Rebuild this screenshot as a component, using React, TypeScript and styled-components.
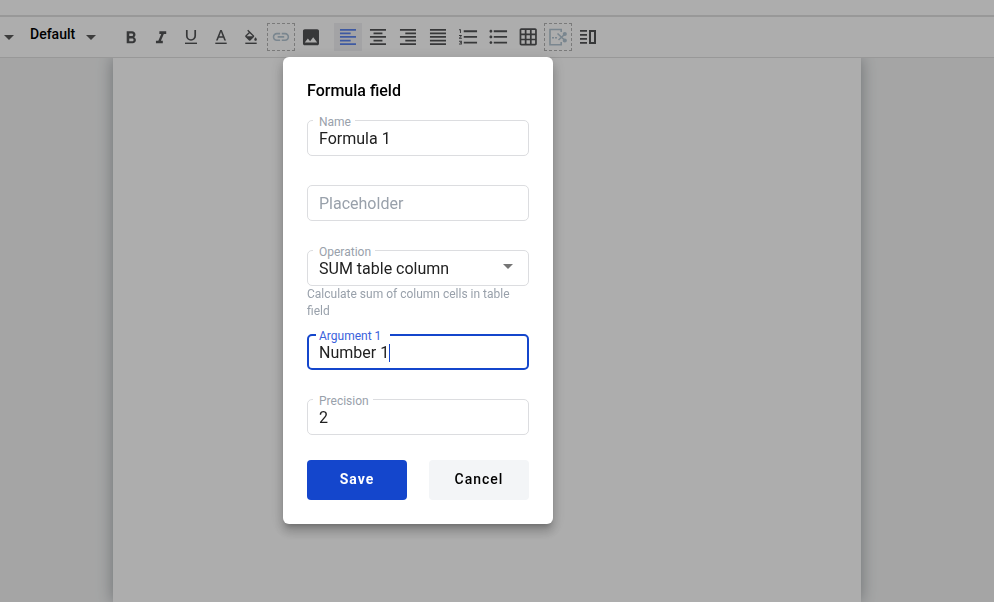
import React, { useEffect, useRef } from 'react';
import styled, { createGlobalStyle, css } from 'styled-components';

const GlobalStyle = createGlobalStyle`
  *, *::before, *::after { box-sizing: border-box; }
  html, body, #root { height: 100%; }
  body {
    margin: 0;
    overflow: hidden;
    background: #f3f4f4;
    color: #000;
    font-family: Roboto, "Liberation Sans", sans-serif;
  }
  button, input, select { font: inherit; }
`;

const Shell = styled.div`
  display: flex;
  flex-direction: column;
  min-height: 100vh;
`;

const Header = styled.header`
  height: 17px;
  background: #fff;
  border-bottom: 2px solid #e1e1e1;
`;

const Toolbar = styled.div`
  display: flex;
  align-items: center;
  height: 41px;
  background: #fff;
  border-bottom: 1px solid #e1e1e1;
`;

const Collapse = styled.button`
  display: flex;
  align-items: center;
  justify-content: center;
  width: 18px;
  height: 28px;
  padding: 0;
  border: 0;
  background: none;
  color: #5a5a5a;
`;

const FontPicker = styled.button`
  display: flex;
  align-items: center;
  gap: 11px;
  margin-left: 12px;
  padding: 0;
  border: 0;
  background: none;
  color: #5a5a5a;
`;

const FontName = styled.span`
  padding-bottom: 6px;
  color: #000;
  font-size: 14px;
  font-weight: 500;
  line-height: 20px;
`;

const Tools = styled.div<{ $gap: number }>`
  display: flex;
  gap: 2px;
  margin-left: ${(p) => p.$gap}px;
`;

const ToolButton = styled.button<{ $active?: boolean; $dashed?: boolean }>`
  display: flex;
  width: 28px;
  height: 28px;
  padding: 0;
  border: 0;
  color: #525355;
  background: ${(p) => (p.$active ? '#f1f1f4' : 'none')};
  ${(p) => p.$active && css`color: #5c84ee;`}
  ${(p) =>
    p.$dashed &&
    css`
      outline: 1px dashed #b4b4b4;
      outline-offset: -1px;
      color: #b4c6d3;
    `}
  svg {
    display: block;
    width: 28px;
    height: 28px;
    fill: currentColor;
  }
`;

const Canvas = styled.main`
  display: flex;
  flex: 1;
  justify-content: center;
  padding-right: 20px;
`;

const Page = styled.div`
  width: 748px;
  max-width: 100%;
  background: #fff;
  box-shadow: 0 0 15px rgba(40, 50, 60, 0.4);
  clip-path: inset(0 -20px);
`;

const Backdrop = styled.div`
  position: fixed;
  inset: 0;
  background: rgba(0, 0, 0, 0.32);
`;

const Dialog = styled.form`
  position: absolute;
  top: 57px;
  left: 283px;
  width: 270px;
  padding: 24px;
  border-radius: 6px;
  background: #fff;
  box-shadow: 0 5px 5px -3px rgba(0, 0, 0, 0.2), 0 8px 10px 1px rgba(0, 0, 0, 0.14),
    0 3px 14px 2px rgba(0, 0, 0, 0.12);
`;

const Title = styled.h2`
  margin: 0 0 19px;
  font-size: 16px;
  font-weight: 500;
  line-height: 20px;
`;

const Field = styled.div`
  position: relative;
  margin-bottom: 29px;
`;

const Label = styled.label<{ $focused?: boolean }>`
  position: absolute;
  top: -6px;
  left: ${(p) => (p.$focused ? 9 : 6)}px;
  padding: ${(p) => (p.$focused ? '0 9px 0 3px' : '0 4px 0 6px')};
  background: #fff;
  color: ${(p) => (p.$focused ? '#3a62dc' : '#99a1ab')};
  font-size: 12px;
  line-height: 16px;
`;

const control = css`
  display: block;
  width: 100%;
  height: 36px;
  padding: 0 11px;
  border: 1px solid #dcdde0;
  border-radius: 5px;
  outline: 0;
  background: #fff;
  color: #212121;
  font-size: 16px;
  line-height: 20px;
`;

const Input = styled.input<{ $focused?: boolean }>`
  ${control}
  ${(p) =>
    p.$focused &&
    css`
      padding: 0 10px;
      border: 2px solid #1446cc;
      caret-color: transparent;
    `}
  &::placeholder {
    color: #99a1ab;
    opacity: 1;
  }
`;

const InputCaret = styled.span`
  position: absolute;
  top: 10px;
  left: 82px;
  width: 1px;
  height: 18px;
  background: #1446cc;
  pointer-events: none;
`;

const Select = styled.select`
  ${control}
  padding-top: 2px;
  appearance: none;
`;

const SelectArrow = styled.svg`
  position: absolute;
  top: 14px;
  right: 16px;
  width: 10px;
  height: 5px;
  fill: #757575;
  pointer-events: none;
`;

const Hint = styled.p`
  margin: 0 0 -15px;
  color: #99a1ab;
  font-size: 12px;
  line-height: 17px;
`;

const Actions = styled.div`
  display: grid;
  grid-template-columns: 1fr 1fr;
  gap: 22px;
  margin-top: -4px;
`;

const ActionButton = styled.button<{ $primary?: boolean }>`
  height: 40px;
  padding: 0 0 3px;
  border: 0;
  border-radius: 4px;
  background: ${(p) => (p.$primary ? '#1446cc' : '#f3f5f7')};
  color: ${(p) => (p.$primary ? '#fff' : '#000')};
  font-size: 14px;
  font-weight: ${(p) => (p.$primary ? 700 : 500)};
  letter-spacing: 1px;
`;

const Caret = () => (
  <svg width="10" height="5" viewBox="0 0 10 5" fill="currentColor" aria-hidden="true">
    <path d="M0 0h10L5 5z" />
  </svg>
);

type Tool = { name: string; icon: React.ReactNode; active?: boolean; dashed?: boolean };

const lines = 'translate(3.3 3.3) scale(.89)';
const lists = 'translate(3.1 2.5) scale(.95)';

const textTools: Tool[] = [
  {
    name: 'Bold',
    icon: (
      <path
        transform="translate(3.7 4.9) scale(.857)"
        d="M15.6 10.79c.97-.67 1.65-1.77 1.65-2.79 0-2.26-1.75-4-4-4H7v14h7.04c2.09 0 3.71-1.7 3.71-3.79 0-1.52-.86-2.82-2.15-3.42zM10 6.5h3c.83 0 1.5.67 1.5 1.5s-.67 1.5-1.5 1.5h-3v-3zm3.5 9H10v-3h3.5c.83 0 1.5.67 1.5 1.5s-.67 1.5-1.5 1.5z"
      />
    ),
  },
  {
    name: 'Italic',
    icon: <path transform="translate(3.8 4.9) scale(.857)" d="M10 4v3h2.21l-3.42 8H6v3h8v-3h-2.21l3.42-8H18V4z" />,
  },
  {
    name: 'Underline',
    icon: (
      <>
        <path d="M9.8 7v5.8a4.2 4.2 0 0 0 8.4 0V7" fill="none" stroke="currentColor" strokeWidth="1.7" />
        <path d="M8 19.6h12V21H8z" />
      </>
    ),
  },
  {
    name: 'Text color',
    icon: (
      <>
        <path d="M13.2 7h1.6l4.2 10.6h-1.7l-1.1-2.8h-4.4l-1.1 2.8H9zm-.8 6.3h3.2L14 9z" />
        <path d="M8.3 19.6h11.4V21H8.3z" />
      </>
    ),
  },
  {
    name: 'Highlight color',
    icon: (
      <>
        <path
          transform="translate(6.2 6.8) scale(.65)"
          d="M16.56 8.94L7.62 0 6.21 1.41l2.38 2.38-5.15 5.15c-.59.59-.59 1.54 0 2.12l5.5 5.5c.29.29.68.44 1.06.44s.77-.15 1.06-.44l5.5-5.5c.59-.58.59-1.53 0-2.12zM5.21 10L10 5.21 14.79 10H5.21zM19 11.5s-2 2.17-2 3.5c0 1.1.9 2 2 2s2-.9 2-2c0-1.33-2-3.5-2-3.5z"
        />
        <path d="M8.3 19.6h11.4V21H8.3z" />
      </>
    ),
  },
  {
    name: 'Link',
    dashed: true,
    icon: (
      <path
        transform="translate(4.1 4.1) scale(.82)"
        d="M3.9 12c0-1.71 1.39-3.1 3.1-3.1h4V7H7c-2.76 0-5 2.24-5 5s2.24 5 5 5h4v-1.9H7c-1.71 0-3.1-1.39-3.1-3.1zM8 13h8v-2H8v2zm9-6h-4v1.9h4c1.71 0 3.1 1.39 3.1 3.1s-1.39 3.1-3.1 3.1h-4V17h4c2.76 0 5-2.24 5-5s-2.24-5-5-5z"
      />
    ),
  },
  {
    name: 'Image',
    icon: (
      <path
        transform="translate(3.3 3.5) scale(.89)"
        d="M21 19V5c0-1.1-.9-2-2-2H5c-1.1 0-2 .9-2 2v14c0 1.1.9 2 2 2h14c1.1 0 2-.9 2-2zM8.5 13.5l2.5 3.01L14.5 12l4.5 6H5l3.5-4.5z"
      />
    ),
  },
];

const blockTools: Tool[] = [
  {
    name: 'Align left',
    active: true,
    icon: <path transform={lines} d="M15 15H3v2h12v-2zm0-8H3v2h12V7zM3 13h18v-2H3v2zm0 8h18v-2H3v2zM3 3v2h18V3H3z" />,
  },
  {
    name: 'Align center',
    icon: <path transform={lines} d="M7 15v2h10v-2H7zm-4 6h18v-2H3v2zm0-8h18v-2H3v2zm4-6v2h10V7H7zM3 3v2h18V3H3z" />,
  },
  {
    name: 'Align right',
    icon: <path transform={lines} d="M3 21h18v-2H3v2zm6-4h12v-2H9v2zm-6-4h18v-2H3v2zm6-4h12V7H9v2zM3 3v2h18V3H3z" />,
  },
  {
    name: 'Justify',
    icon: <path transform={lines} d="M3 21h18v-2H3v2zm0-4h18v-2H3v2zm0-4h18v-2H3v2zm0-4h18V7H3v2zm0-6v2h18V3H3z" />,
  },
  {
    name: 'Numbered list',
    icon: (
      <path
        transform={lists}
        d="M2 17h2v.5H3v1h1v.5H2v1h3v-4H2v1zm1-9h1V4H2v1h1v3zm-1 3h1.8L2 13.1v.9h3v-1H3.2L5 10.9V10H2v1zm5-6v2h14V5H7zm0 14h14v-2H7v2zm0-6h14v-2H7v2z"
      />
    ),
  },
  {
    name: 'Bulleted list',
    icon: (
      <path
        transform={lists}
        d="M4 10.5c-.83 0-1.5.67-1.5 1.5s.67 1.5 1.5 1.5 1.5-.67 1.5-1.5-.67-1.5-1.5-1.5zm0-6c-.83 0-1.5.67-1.5 1.5S3.17 7.5 4 7.5 5.5 6.83 5.5 6 4.83 4.5 4 4.5zm0 12c-.83 0-1.5.68-1.5 1.5s.68 1.5 1.5 1.5 1.5-.68 1.5-1.5-.67-1.5-1.5-1.5zM7 19h14v-2H7v2zm0-6h14v-2H7v2zm0-8v2h14V5H7z"
      />
    ),
  },
  {
    name: 'Table',
    icon: (
      <path
        transform="translate(3.9 3.6) scale(.86)"
        d="M20 2H4c-1.1 0-2 .9-2 2v16c0 1.1.9 2 2 2h16c1.1 0 2-.9 2-2V4c0-1.1-.9-2-2-2zM8 20H4v-4h4v4zm0-6H4v-4h4v4zm0-6H4V4h4v4zm6 12h-4v-4h4v4zm0-6h-4v-4h4v4zm0-6h-4V4h4v4zm6 12h-4v-4h4v4zm0-6h-4v-4h4v4zm0-6h-4V4h4v4z"
      />
    ),
  },
  {
    name: 'Page break',
    dashed: true,
    icon: (
      <g fill="none" stroke="currentColor" strokeWidth="1.6">
        <path d="M17.2 9V6.500H6v15.200h11.200V19" />
        <path d="M8 14.800h2M11 14.800h2" />
        <path d="M13.500 10.500l7 6.500M14.500 17l6-5.500" />
        <circle cx="20.800" cy="11" r="1.300" fill="currentColor" />
        <circle cx="20.800" cy="17.500" r="1.300" fill="currentColor" />
      </g>
    ),
  },
  {
    name: 'Columns',
    icon: (
      <>
        <path d="M6 7h7v1.800H6zM6 11h7v1.800H6zM6 15h7v1.800H6zM6 19h7v1.800H6z" />
        <path d="M16 8h5v12h-5z" fill="none" stroke="currentColor" strokeWidth="2" />
      </>
    ),
  },
];

const ToolGroup = ({ tools, gap }: { tools: Tool[]; gap: number }) => (
  <Tools $gap={gap}>
    {tools.map((t) => (
      <ToolButton key={t.name} type="button" aria-label={t.name} $active={t.active} $dashed={t.dashed}>
        <svg viewBox="0 0 28 28" aria-hidden="true">
          {t.icon}
        </svg>
      </ToolButton>
    ))}
  </Tools>
);

export default function App() {
  const argument = useRef<HTMLInputElement>(null);

  useEffect(() => {
    const el = argument.current;
    if (el) {
      el.focus();
      el.setSelectionRange(el.value.length, el.value.length);
    }
  }, []);

  return (
    <>
      <GlobalStyle />
      <Shell>
        <Header />
        <Toolbar>
          <Collapse type="button" aria-label="Styles">
            <Caret />
          </Collapse>
          <FontPicker type="button">
            <FontName>Default</FontName>
            <Caret />
          </FontPicker>
          <ToolGroup tools={textTools} gap={21} />
          <ToolGroup tools={blockTools} gap={9} />
        </Toolbar>
        <Canvas>
          <Page />
        </Canvas>
      </Shell>
      <Backdrop>
        <Dialog role="dialog" aria-labelledby="dialog-title" onSubmit={(e) => e.preventDefault()}>
          <Title id="dialog-title">Formula field</Title>
          <Field>
            <Input id="name" defaultValue="Formula 1" />
            <Label htmlFor="name">Name</Label>
          </Field>
          <Field>
            <Input aria-label="Placeholder" placeholder="Placeholder" />
          </Field>
          <Field>
            <Select id="operation" defaultValue="sum" aria-describedby="operation-hint">
              <option value="sum">SUM table column</option>
            </Select>
            <Label htmlFor="operation">Operation</Label>
            <SelectArrow viewBox="0 0 10 5" aria-hidden="true">
              <path d="M0 0h10L5 5z" />
            </SelectArrow>
            <Hint id="operation-hint">Calculate sum of column cells in table field</Hint>
          </Field>
          <Field>
            <Input id="argument" ref={argument} defaultValue="Number 1" $focused />
            <InputCaret />
            <Label htmlFor="argument" $focused>
              Argument 1
            </Label>
          </Field>
          <Field>
            <Input id="precision" defaultValue="2" inputMode="numeric" />
            <Label htmlFor="precision">Precision</Label>
          </Field>
          <Actions>
            <ActionButton type="submit" $primary>
              Save
            </ActionButton>
            <ActionButton type="button">Cancel</ActionButton>
          </Actions>
        </Dialog>
      </Backdrop>
    </>
  );
}
